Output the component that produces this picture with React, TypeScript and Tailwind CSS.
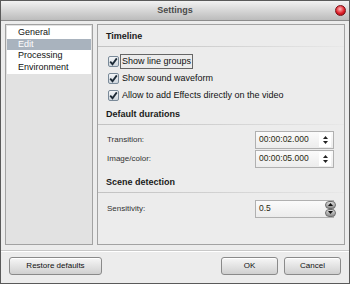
import React from "react";

const sans = { fontFamily: "'Liberation Sans', Arial, sans-serif" };

function Check({ label, boxed }: { label: string; boxed?: boolean }) {
  return (
    <div className="flex items-center h-[17px] pl-[10px]">
      <div className="w-[11px] h-[11px] border border-[#7a8a99] bg-gradient-to-b from-[#f4f6f8] to-[#cfd6dd] rounded-[2px] flex items-center justify-center">
        <svg width="9" height="9" viewBox="0 0 9 9">
          <path d="M1.2 4.6 L3.5 7.2 L7.8 1.4" stroke="#1d2a36" strokeWidth="1.8" fill="none" />
        </svg>
      </div>
      <span
        className={`ml-[1px] text-[9px] leading-[13px] text-[#111] px-[1px] ${boxed ? "border border-[#666]" : "border border-transparent"}`}
      >
        {label}
      </span>
    </div>
  );
}

function Header({ title }: { title: string }) {
  return (
    <div>
      <div className="h-[20px] pt-[2px] flex items-center pl-[8px] text-[9px] font-bold text-[#1a1a1a]">{title}</div>
      <div className="h-[1px] bg-gradient-to-r from-[#c2c2c2] via-[#d2d2d2] to-[#e8e8e8]" />
    </div>
  );
}

function Spin({ value, round }: { value: string; round?: boolean }) {
  return (
    <div className="flex items-center w-[79px] h-[18px] border border-[#b0b0b0] bg-gradient-to-b from-[#fbfbfb] to-[#ececec]">
      <span className="flex-1 pl-[3px] text-[8.5px] text-[#2a2a12]">{value}</span>
      {round ? (
        <div className="flex flex-col w-[12px] mr-[-4px]">
          <div className="w-[11px] h-[8px] rounded-full bg-gradient-to-b from-[#dcdcdc] to-[#8e8e8e] border border-[#6d6d6d] flex items-center justify-center">
            <svg width="5" height="3" viewBox="0 0 5 3"><path d="M0 3 L2.5 0 L5 3Z" fill="#111" /></svg>
          </div>
          <div className="w-[11px] h-[8px] rounded-full bg-gradient-to-b from-[#dcdcdc] to-[#8e8e8e] border border-[#6d6d6d] flex items-center justify-center">
            <svg width="5" height="3" viewBox="0 0 5 3"><path d="M0 0 L2.5 3 L5 0Z" fill="#111" /></svg>
          </div>
        </div>
      ) : (
        <div className="flex flex-col items-center justify-center w-[12px] gap-[2px] mr-[2px] bg-white h-[14px]">
          <svg width="5" height="3" viewBox="0 0 5 3"><path d="M0 3 L2.5 0 L5 3Z" fill="#222" /></svg>
          <svg width="5" height="3" viewBox="0 0 5 3"><path d="M0 0 L2.5 3 L5 0Z" fill="#222" /></svg>
        </div>
      )}
    </div>
  );
}

function Row({ label, value, round }: { label: string; value: string; round?: boolean }) {
  return (
    <div className="flex items-center justify-between h-[19px] pl-[9px] pr-[10px]">
      <span className="text-[8px] text-[#333]">{label}</span>
      <Spin value={value} round={round} />
    </div>
  );
}

function Btn({ label, w }: { label: string; w: string }) {
  return (
    <button
      className={`${w} h-[18px] rounded-[3px] border border-[#8a8a8a] bg-gradient-to-b from-[#f7f7f7] to-[#d0d0d0] text-[8px] text-[#111] flex items-center justify-center shadow-[0_1px_0_#fff_inset]`}
    >
      {label}
    </button>
  );
}

export default function App() {
  const items = ["General", "Edit", "Processing", "Environment"];
  return (
    <div className="w-[350px] h-[284px] bg-[#ececec] border border-[#5a5a5a] flex flex-col overflow-hidden" style={sans}>
      <div className="h-[20px] shrink-0 bg-gradient-to-b from-[#f2f2f2] to-[#bcbcbc] border-b border-[#8c8c8c] flex items-center justify-center relative">
        <span className="text-[9px] font-bold text-[#4a4a4a]">Settings</span>
        <div className="absolute right-[3px] top-[4px] w-[11px] h-[11px] rounded-full bg-[radial-gradient(circle_at_45%_35%,#ffb8b8,#e0202a_55%,#8a0a10)] border border-[#7a1015]" />
      </div>

      <div className="flex gap-[4px] px-[4px] pt-[3px] h-[224px]">
        <div className="w-[88px] border border-[#a2a2a2] bg-[#e2e2e2] p-[1px]">
          <div className="bg-white pt-[1px] pb-[1px]">
            {items.map((it) => (
              <div
                key={it}
                className={`h-[11.5px] leading-[11.5px] pl-[11px] text-[9px] ${it === "Edit" ? "bg-[#a9b3be] text-white" : "text-[#111]"}`}
              >
                {it}
              </div>
            ))}
          </div>
        </div>

        <div className="flex-1 border border-[#a2a2a2] bg-[#ececec] pt-[1px]">
          <Header title="Timeline" />
          <div className="pt-[6px]">
            <Check label="Show line groups" boxed />
            <Check label="Show sound waveform" />
            <Check label="Allow to add Effects directly on the video" />
          </div>
          <Header title="Default durations" />
          <div className="pt-[5px] pb-[4px]">
            <Row label="Transition:" value="00:00:02.000" />
            <Row label="Image/color:" value="00:00:05.000" />
          </div>
          <Header title="Scene detection" />
          <div className="pt-[6px]">
            <Row label="Sensitivity:" value="0.5" round />
          </div>
        </div>
      </div>

      <div className="mt-[5px] h-[1px] bg-[#c8c8c8] border-b border-white box-content" />

      <div className="flex items-center px-[8px] pt-[5px]">
        <Btn label="Restore defaults" w="w-[93px]" />
        <div className="flex-1" />
        <Btn label="OK" w="w-[57px]" />
        <div className="w-[6px]" />
        <Btn label="Cancel" w="w-[57px]" />
      </div>
    </div>
  );
}
